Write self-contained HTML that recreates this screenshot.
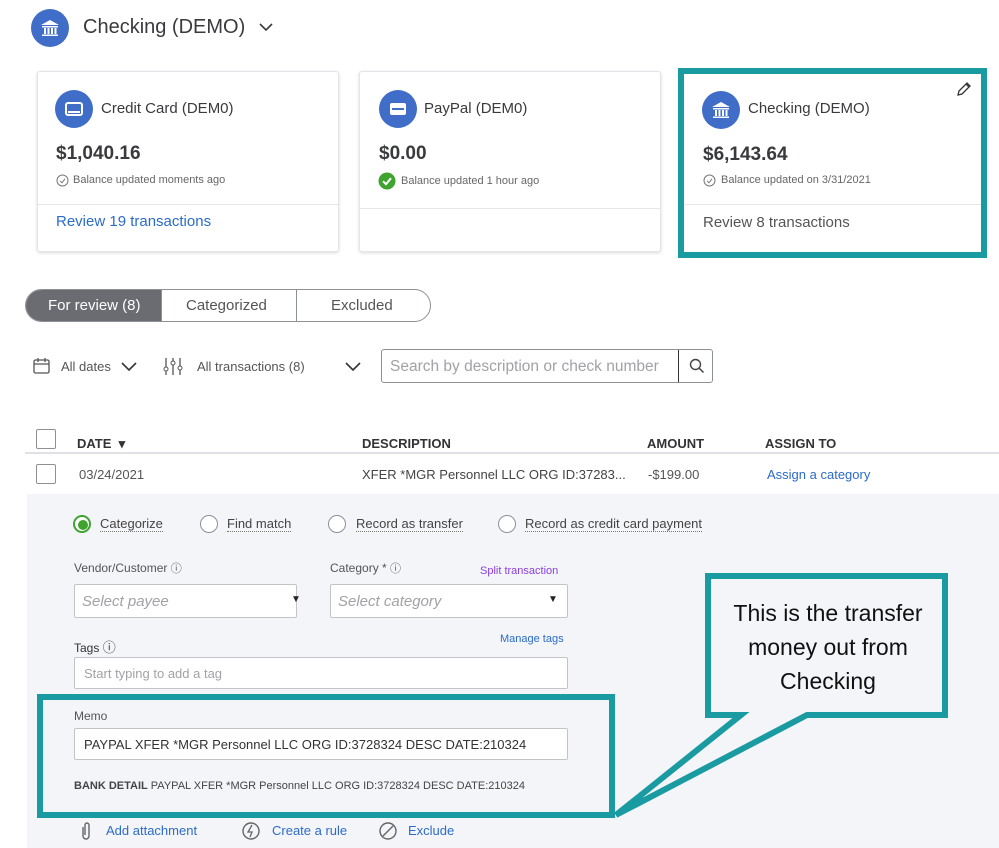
<!DOCTYPE html>
<html><head><meta charset="utf-8"><style>
*{margin:0;padding:0;box-sizing:border-box}
body{width:999px;height:848px;background:#fff;font-family:"Liberation Sans",sans-serif;color:#393a3d;position:relative;overflow:hidden}
.a{position:absolute;white-space:nowrap}
.card{position:absolute;background:#fff;border:1px solid #e3e5e8;border-radius:3px;box-shadow:0 1px 3px rgba(0,0,0,.15)}
.circ{position:absolute;width:38px;height:38px;border-radius:50%;background:#3f6dc7}
.t14{font-size:14px}
.lnk{color:#2b6bc9}
.box{position:absolute;background:#fff;border:1px solid #c2c4c8;border-radius:2px}
.lab{font-size:12px;color:#555}
.rad{position:absolute;width:18px;height:18px;border:1px solid #8d9096;border-radius:50%;background:#fff}
.ul{border-bottom:1px dotted #777;font-size:13px;color:#444}
</style></head><body>

<div class="circ" style="left:31px;top:9px"></div>
<svg class="a" style="left:39px;top:17px" width="22" height="22" viewBox="0 0 22 22"><path d="M2 8 L11 3 L20 8 Z M3 9h16v1.5H3z M5 11h2v6H5z M8.5 11h2v6h-2z M12 11h2v6h-2z M15.5 11h2v6h-2z M3 17.5h16V19H3z" fill="#fff"/></svg>
<div class="a" style="left:83px;top:16px;font-size:20px;color:#393a3d">Checking (DEMO)</div>
<svg class="a" style="left:259px;top:22px" width="14" height="10"><path d="M1 2l6 6 6-6" stroke="#393a3d" stroke-width="1.6" fill="none"/></svg>

<!-- card 1 -->
<div class="card" style="left:37px;top:71px;width:302px;height:181px">
 <div style="position:absolute;left:0;right:0;top:132px;border-top:1px solid #e6e7ea"></div>
</div>
<div class="circ" style="left:55px;top:90px"></div>
<svg class="a" style="left:64px;top:99px" width="20" height="20"><rect x="2" y="4" width="16" height="12" rx="2" fill="none" stroke="#fff" stroke-width="2"/><rect x="4" y="12" width="12" height="2" fill="#fff"/></svg>
<div class="a t14" style="left:101px;top:100px;font-size:15px">Credit Card (DEM0)</div>
<div class="a" style="left:56px;top:143px;font-size:19px;font-weight:bold">$1,040.16</div>
<svg class="a" style="left:56px;top:174px" width="13" height="13"><circle cx="6.5" cy="6.5" r="5.5" fill="none" stroke="#777"/><path d="M4 6.8l2 2 3-4" stroke="#777" fill="none"/></svg>
<div class="a" style="left:73px;top:174px;font-size:11px;color:#666">Balance updated moments ago</div>
<div class="a lnk" style="left:56px;top:213px;font-size:15px">Review 19 transactions</div>

<!-- card 2 -->
<div class="card" style="left:359px;top:71px;width:302px;height:181px">
 <div style="position:absolute;left:0;right:0;top:136px;border-top:1px solid #e6e7ea"></div>
</div>
<div class="circ" style="left:379px;top:90px"></div>
<svg class="a" style="left:388px;top:99px" width="20" height="20"><rect x="2" y="4" width="16" height="12" rx="2" fill="#fff"/><rect x="4" y="9" width="12" height="2" fill="#3f6dc7"/></svg>
<div class="a" style="left:424px;top:100px;font-size:15px">PayPal (DEM0)</div>
<div class="a" style="left:379px;top:143px;font-size:19px;font-weight:bold">$0.00</div>
<svg class="a" style="left:378px;top:172px" width="18" height="18"><circle cx="9" cy="9" r="8.5" fill="#3ea42e"/><path d="M5 9.2l3 3 5-6" stroke="#fff" stroke-width="2" fill="none"/></svg>
<div class="a" style="left:401px;top:175px;font-size:11px;color:#666">Balance updated 1 hour ago</div>

<!-- card 3 -->
<div class="a" style="left:678px;top:68px;width:309px;height:190px;border:6px solid #1a9ba1;background:#fff"></div>
<div style="position:absolute;left:684px;top:204px;width:297px;border-top:1px solid #e6e7ea"></div>
<div class="circ" style="left:702px;top:91px"></div>
<svg class="a" style="left:710px;top:99px" width="22" height="22" viewBox="0 0 22 22"><path d="M2 8 L11 3 L20 8 Z M3 9h16v1.5H3z M5 11h2v6H5z M8.5 11h2v6h-2z M12 11h2v6h-2z M15.5 11h2v6h-2z M3 17.5h16V19H3z" fill="#fff"/></svg>
<div class="a" style="left:748px;top:100px;font-size:15px">Checking (DEMO)</div>
<svg class="a" style="left:956px;top:81px" width="16" height="16"><path d="M2 14l1-4 8-8 3 3-8 8z M10 3l3 3" stroke="#333" stroke-width="1.3" fill="none"/></svg>
<div class="a" style="left:703px;top:144px;font-size:19px;font-weight:bold">$6,143.64</div>
<svg class="a" style="left:703px;top:174px" width="13" height="13"><circle cx="6.5" cy="6.5" r="5.5" fill="none" stroke="#777"/><path d="M4 6.8l2 2 3-4" stroke="#777" fill="none"/></svg>
<div class="a" style="left:721px;top:174px;font-size:11px;color:#666">Balance updated on 3/31/2021</div>
<div class="a" style="left:703px;top:214px;font-size:15px;color:#555">Review 8 transactions</div>

<!-- tabs -->
<div class="a" style="left:25px;top:289px;width:406px;height:33px;border:1px solid #8d9096;border-radius:17px;overflow:hidden">
 <div style="position:absolute;left:0;top:0;width:135px;height:100%;background:#6b6c72"></div>
 <div style="position:absolute;left:270px;top:0;height:100%;border-left:1px solid #8d9096"></div>
 <div style="position:absolute;left:135px;top:0;height:100%;border-left:1px solid #8d9096"></div>
 <div class="a" style="left:22px;top:7px;font-size:15px;color:#fff">For review (8)</div>
 <div class="a" style="left:160px;top:7px;font-size:15px;color:#555">Categorized</div>
 <div class="a" style="left:305px;top:7px;font-size:15px;color:#555">Excluded</div>
</div>

<!-- filters -->
<svg class="a" style="left:33px;top:357px" width="17" height="18"><rect x="1" y="3" width="15" height="13" rx="1.5" fill="none" stroke="#555" stroke-width="1.3"/><path d="M1 7h15M5 1v4M12 1v4" stroke="#555" stroke-width="1.3"/></svg>
<div class="a" style="left:61px;top:359px;font-size:13px;color:#555">All dates</div>
<svg class="a" style="left:121px;top:362px" width="16" height="10"><path d="M1 1l7 7 7-7" stroke="#333" stroke-width="1.6" fill="none"/></svg>
<svg class="a" style="left:163px;top:357px" width="20" height="19"><path d="M3 1v17M10 1v17M17 1v17" stroke="#555" stroke-width="1.3"/><circle cx="3" cy="12" r="2" fill="#fff" stroke="#555"/><circle cx="10" cy="6" r="2" fill="#fff" stroke="#555"/><circle cx="17" cy="11" r="2" fill="#fff" stroke="#555"/></svg>
<div class="a" style="left:197px;top:359px;font-size:13px;color:#555">All transactions (8)</div>
<svg class="a" style="left:345px;top:362px" width="16" height="10"><path d="M1 1l7 7 7-7" stroke="#333" stroke-width="1.6" fill="none"/></svg>
<div class="a" style="left:381px;top:349px;width:332px;height:34px;border:1px solid #8d9096;border-radius:3px;background:#fff">
 <div class="a" style="left:8px;top:8px;font-size:15.5px;color:#a0a2a6">Search by description or check number</div>
 <div style="position:absolute;left:296px;top:0;height:100%;border-left:1px solid #333"></div>
 <svg class="a" style="left:306px;top:7px" width="18" height="18"><circle cx="7.5" cy="7.5" r="5" fill="none" stroke="#444" stroke-width="1.4"/><path d="M11 11l4.5 4.5" stroke="#444" stroke-width="1.5"/></svg>
</div>

<!-- table -->
<div class="a" style="left:36px;top:429px;width:20px;height:20px;border:1px solid #8d9096;border-radius:2px"></div>
<div class="a" style="left:77px;top:436px;font-size:13px;font-weight:bold;color:#333">DATE &nbsp;▾</div>
<div class="a" style="left:362px;top:436px;font-size:13px;font-weight:bold;color:#333">DESCRIPTION</div>
<div class="a" style="left:647px;top:436px;font-size:13px;font-weight:bold;color:#333">AMOUNT</div>
<div class="a" style="left:765px;top:436px;font-size:13px;font-weight:bold;color:#333">ASSIGN TO</div>
<div class="a" style="left:25px;top:452px;width:974px;border-top:2px solid #e0e1e4"></div>
<div class="a" style="left:36px;top:464px;width:20px;height:20px;border:1px solid #8d9096;border-radius:2px"></div>
<div class="a" style="left:79px;top:467px;font-size:13px;color:#555">03/24/2021</div>
<div class="a" style="left:362px;top:467px;font-size:13px;color:#444">XFER *MGR Personnel LLC ORG ID:37283...</div>
<div class="a" style="left:648px;top:467px;font-size:13px;color:#555">-$199.00</div>
<div class="a lnk" style="left:767px;top:467px;font-size:13px">Assign a category</div>

<!-- panel -->
<div class="a" style="left:27px;top:494px;width:972px;height:354px;background:#f4f5f9"></div>
<div class="rad" style="left:73px;top:515px;border:2px solid #3ea42e"></div>
<div class="a" style="left:78px;top:520px;width:10px;height:10px;border-radius:50%;background:#3ea42e"></div>
<div class="a ul" style="left:100px;top:516px">Categorize</div>
<div class="rad" style="left:200px;top:515px"></div>
<div class="a ul" style="left:227px;top:516px">Find match</div>
<div class="rad" style="left:328px;top:515px"></div>
<div class="a ul" style="left:356px;top:516px">Record as transfer</div>
<div class="rad" style="left:498px;top:515px"></div>
<div class="a ul" style="left:525px;top:516px">Record as credit card payment</div>

<div class="a lab" style="left:74px;top:560px">Vendor/Customer <span style="font-size:11px">ⓘ</span></div>
<div class="a lab" style="left:330px;top:560px">Category * <span style="font-size:11px">ⓘ</span></div>
<div class="a" style="left:480px;top:565px;font-size:11px;color:#8b3fe0">Split transaction</div>
<div class="box" style="left:74px;top:584px;width:223px;height:34px"><div class="a" style="left:7px;top:8px;font-size:15px;font-style:italic;color:#a0a2a6">Select payee</div><div class="a" style="top:9px;font-size:10px;color:#222;left:216px">▼</div></div>
<div class="box" style="left:330px;top:584px;width:238px;height:34px"><div class="a" style="left:7px;top:8px;font-size:15px;font-style:italic;color:#a0a2a6">Select category</div><div class="a" style="left:217px;top:9px;font-size:10px;color:#222">▼</div></div>
<div class="a lab" style="left:74px;top:637px;color:#333">Tags <span style="font-size:13px">ⓘ</span></div>
<div class="a lnk" style="left:500px;top:633px;font-size:11px">Manage tags</div>
<div class="box" style="left:74px;top:657px;width:494px;height:32px"><div class="a" style="left:9px;top:8px;font-size:13px;color:#a0a2a6">Start typing to add a tag</div></div>

<div class="a" style="left:37px;top:694px;width:578px;height:124px;border:6px solid #1a9ba1"></div>
<div class="a lab" style="left:74px;top:709px">Memo</div>
<div class="box" style="left:74px;top:728px;width:494px;height:32px"><div class="a" style="left:9px;top:8px;font-size:13px;color:#333">PAYPAL XFER *MGR Personnel LLC ORG ID:3728324 DESC DATE:210324</div></div>
<div class="a" style="left:74px;top:780px;font-size:11px;color:#444"><b>BANK DETAIL</b> PAYPAL XFER *MGR Personnel LLC ORG ID:3728324 DESC DATE:210324</div>

<svg class="a" style="left:79px;top:821px" width="14" height="20"><path d="M4 6v9a3 3 0 0 0 6 0V4a2 2 0 0 0-4 0v10" stroke="#666" stroke-width="1.4" fill="none"/></svg>
<div class="a lnk" style="left:106px;top:823px;font-size:13px">Add attachment</div>
<svg class="a" style="left:241px;top:821px" width="20" height="20"><circle cx="10" cy="10" r="8" fill="none" stroke="#666" stroke-width="1.4"/><path d="M11 4l-4 7h4l-2 5" stroke="#666" stroke-width="1.3" fill="none"/></svg>
<div class="a lnk" style="left:272px;top:823px;font-size:13px">Create a rule</div>
<svg class="a" style="left:378px;top:821px" width="20" height="20"><circle cx="10" cy="10" r="8" fill="none" stroke="#666" stroke-width="1.4"/><path d="M5 15L15 5" stroke="#666" stroke-width="1.4"/></svg>
<div class="a lnk" style="left:408px;top:823px;font-size:13px">Exclude</div>

<!-- callout -->
<svg class="a" style="left:0;top:0" width="999" height="848">
<path d="M708 576 H945 V715 H807 L616 815 L741 715 H708 Z" fill="#f4f5f9" stroke="#1a9ba1" stroke-width="6" stroke-linejoin="miter"/>
</svg>
<div class="a" style="left:708px;top:596px;width:240px;text-align:center;font-size:23px;line-height:34px;color:#111;white-space:normal;font-family:'Liberation Sans',sans-serif">This is the transfer money out from Checking</div>
</body></html>
